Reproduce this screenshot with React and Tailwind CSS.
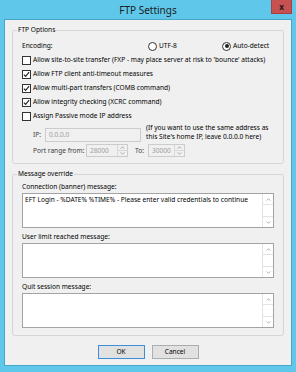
function Check({ on }) {
  return (
    <span className="flex h-[9px] w-[9px] shrink-0 items-center justify-center border border-[#333333] bg-white">
      {on && (
        <svg viewBox="0 0 8 8" className="h-[7px] w-[7px]">
          <path d="M1 4.2 L3 6.2 L7 1.4" stroke="#222" strokeWidth="1.3" fill="none" />
        </svg>
      )}
    </span>
  );
}

function Radio({ on }) {
  return (
    <span className="flex h-[9px] w-[9px] shrink-0 items-center justify-center rounded-full border border-[#333333] bg-white">
      {on && <span className="h-[4px] w-[4px] rounded-full bg-[#222]" />}
    </span>
  );
}

function Chevron({ up }) {
  return (
    <svg viewBox="0 0 6 4" className="h-[3px] w-[5px]">
      <path d={up ? "M0.5 3.5 L3 1 L5.5 3.5" : "M0.5 0.5 L3 3 L5.5 0.5"} stroke="#8a8a8a" strokeWidth="0.9" fill="none" />
    </svg>
  );
}

function Spinner({ value, width }) {
  return (
    <div className={`flex h-[13px] border border-[#cccccc] bg-[#f0f0f0] ${width}`}>
      <span className="flex-1 pl-[3px] leading-[11px] text-[#a0a0a0]">{value}</span>
      <div className="flex w-[10px] flex-col border-l border-[#d9d9d9]">
        <span className="flex flex-1 items-center justify-center border-b border-[#d9d9d9]">
          <Chevron up />
        </span>
        <span className="flex flex-1 items-center justify-center">
          <Chevron />
        </span>
      </div>
    </div>
  );
}

function MessageBox({ text }) {
  return (
    <div className="mt-[1px] flex h-[35px] border border-[#a3a3a3] bg-white">
      <div className="flex-1 whitespace-nowrap pl-[2px] pt-[1px] leading-[10px]">{text}</div>
      <div className="flex w-[11px] flex-col border-l border-[#e3e3e3]">
        <span className="flex h-[11px] items-center justify-center border-b border-[#e3e3e3]">
          <Chevron up />
        </span>
        <span className="flex-1" />
        <span className="flex h-[11px] items-center justify-center border-t border-[#e3e3e3]">
          <Chevron />
        </span>
      </div>
    </div>
  );
}

function CheckRow({ on, label }) {
  return (
    <div className="flex h-[14px] items-center gap-[2px]">
      <Check on={on} />
      <span className="whitespace-nowrap">{label}</span>
    </div>
  );
}

export default function App() {
  return (
    <div className="flex h-[372px] w-[296px] flex-col bg-[#5fc8ea] font-['Noto_Sans',sans-serif] text-[6.6px] leading-[10px] text-black">
      <div className="relative flex h-[19px] shrink-0 items-center justify-center">
        <span className="text-[10px] leading-[12px] text-[#1b1b1b]">FTP Settings</span>
        <div className="absolute right-[4px] top-0 flex h-[14px] w-[21px] items-center justify-center border border-t-0 border-[#a94040] bg-[#c75050] text-[8px] font-bold leading-none text-[#1a1a1a]">
          x
        </div>
      </div>

      <div className="mx-[4px] mb-[6px] flex flex-1 flex-col border border-[#4aa6c7] bg-[#f0f0f0] px-[7px] pt-[5px]">
        <fieldset className="rounded-[3px] border border-[#d5d5d5]">
          <legend className="ml-[4px] px-[1px] leading-[10px]">FTP Options</legend>
          <div className="pb-[6px] pl-[9px] pr-[6px]">
            <div className="mt-[4px] flex h-[14px] items-center">
              <span className="w-[126px]">Encoding:</span>
              <div className="flex w-[74px] items-center gap-[2px]">
                <Radio />
                <span>UTF-8</span>
              </div>
              <div className="flex items-center gap-[2px]">
                <Radio on />
                <span>Auto-detect</span>
              </div>
            </div>
            <CheckRow label="Allow site-to-site transfer (FXP - may place server at risk to 'bounce' attacks)" />
            <CheckRow on label="Allow FTP client anti-timeout measures" />
            <CheckRow on label="Allow multi-part transfers (COMB command)" />
            <CheckRow on label="Allow integrity checking (XCRC command)" />
            <CheckRow label="Assign Passive mode IP address" />

            <div className="flex items-start pl-[11px]">
              <span className="mt-[7px] w-[12px] text-[#3c3c3c]">IP:</span>
              <div className="mt-[5px] h-[14px] w-[96px] border border-[#cccccc] bg-[#f0f0f0] pl-[3px] leading-[12px] text-[#a0a0a0]">
                0.0.0.0
              </div>
              <div className="ml-[5px] whitespace-nowrap leading-[9px]">
                (If you want to use the same address as
                <br />
                this Site's home IP, leave 0.0.0.0 here)
              </div>
            </div>

            <div className="mt-[2px] flex items-center whitespace-nowrap pl-[11px]">
              <span className="w-[53px] text-[#3c3c3c]">Port range from:</span>
              <Spinner value="28000" width="w-[42px]" />
              <span className="ml-[7px] w-[13px] text-[#3c3c3c]">To:</span>
              <Spinner value="30000" width="w-[37px]" />
            </div>
          </div>
        </fieldset>

        <fieldset className="mt-[5px] rounded-[3px] border border-[#d5d5d5]">
          <legend className="ml-[4px] px-[1px] leading-[10px]">Message override</legend>
          <div className="px-[9px] pb-[7px]">
            <div className="mt-[3px] h-[10px]">Connection (banner) message:</div>
            <MessageBox text="EFT Login - %DATE% %TIME% - Please enter valid credentials to continue" />
            <div className="mt-[4px] h-[10px]">User limit reached message:</div>
            <MessageBox text="" />
            <div className="mt-[4px] h-[10px]">Quit session message:</div>
            <MessageBox text="" />
          </div>
        </fieldset>

        <div className="mt-[9px] flex justify-center gap-[7px]">
          <button className="h-[14px] w-[47px] border border-[#3c8fd6] bg-[#e1e1e1] text-[6.6px] leading-[12px]">
            OK
          </button>
          <button className="h-[14px] w-[47px] border border-[#adadad] bg-[#e1e1e1] text-[6.6px] leading-[12px]">
            Cancel
          </button>
        </div>
      </div>
    </div>
  );
}
